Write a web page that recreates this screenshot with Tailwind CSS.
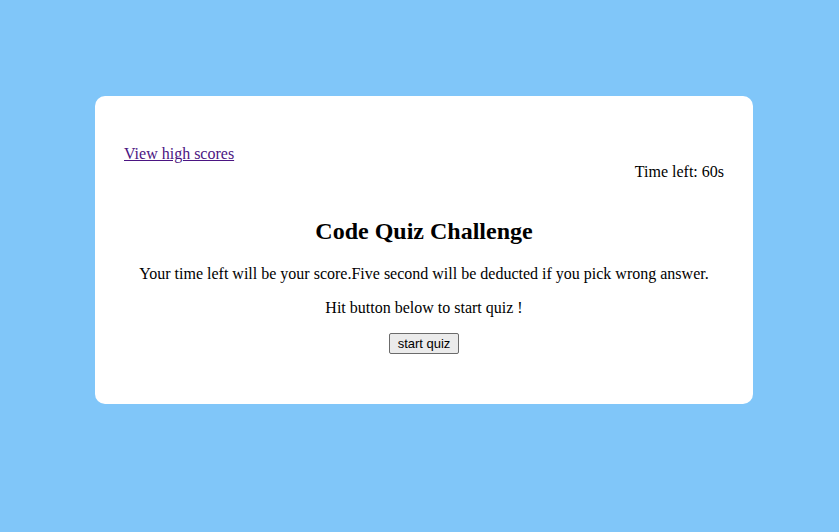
<!DOCTYPE html>
<html lang="en">
<head>
<meta charset="utf-8">
<meta name="viewport" content="width=device-width, initial-scale=1">
<title>Code Quiz Challenge</title>
<script src="https://cdn.jsdelivr.net/npm/@tailwindcss/browser@4"></script>
</head>
<body class="min-h-screen bg-[#80c6f9] pt-24 pb-32 pl-[95px] pr-[86px] font-['Liberation_Serif',serif] text-base leading-[18px] text-black">
<main class="rounded-[10px] bg-white px-[29px] pt-12 pb-[50px]">
  <header class="flex items-start justify-between">
    <a href="#scores" class="mt-px text-[#4b1582] underline">View high scores</a>
    <p class="mt-[19px]">Time left: 60s</p>
  </header>
  <section class="mt-9 flex flex-col items-center gap-4 text-center">
    <h1 class="mb-1 text-2xl leading-7 font-bold">Code Quiz Challenge</h1>
    <p>Your time left will be your score.Five second will be deducted if you pick wrong answer.</p>
    <p>Hit button below to start quiz !</p>
    <button type="button" class="rounded-[2px] border border-[#6b6b6b] bg-[#ebebeb] px-2 py-px font-['Liberation_Sans',sans-serif] text-[13px] leading-[17px]">start quiz</button>
  </section>
</main>
</body>
</html>
